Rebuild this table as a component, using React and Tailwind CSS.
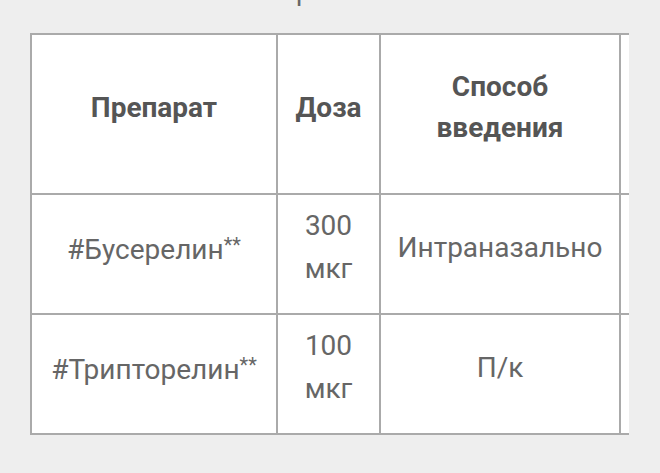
const rows = [
  { name: '#Бусерелин', dose: ['300', 'мкг'], route: 'Интраназально' },
  { name: '#Трипторелин', dose: ['100', 'мкг'], route: 'П/к' },
]

function HeadCell({ children, className = '' }) {
  return (
    <div className={`flex items-center justify-center text-center px-3 pb-[14px] h-[160px] border-r-2 border-b-2 border-[#aaaaaa] bg-white font-bold text-[28px] leading-[41px] text-[#555555] ${className}`}>
      {children}
    </div>
  )
}

function Cell({ children, className = '' }) {
  return (
    <div className={`flex items-center justify-center text-center px-2 pb-[14px] h-[120px] border-r-2 border-b-2 border-[#aaaaaa] bg-white text-[28px] leading-[43px] text-[#666666] ${className}`}>
      {children}
    </div>
  )
}

export default function App() {
  return (
    <div className="min-h-screen bg-[#eeeeee]" style={{ fontFamily: 'Roboto, "Noto Sans", sans-serif' }}>
      {/* caption above, scrolled out of view */}
      <div className="h-[33px] overflow-hidden">
        <p className="-mt-[30px] pl-[296px] text-[27px] leading-[43px] text-[#666666]">р</p>
      </div>

      <div className="ml-[30px] mr-[31px] overflow-hidden">
        <div className="grid grid-cols-[246px_103px_240px_220px] w-max border-l-2 border-t-2 border-[#aaaaaa]">
          <HeadCell>Препарат</HeadCell>
          <HeadCell>Доза</HeadCell>
          <HeadCell>
            <span>Способ<br />введения</span>
          </HeadCell>
          <HeadCell>
            <span>Кратность</span>
          </HeadCell>

          {rows.map(r => (
            <>
              <Cell key={r.name + 'n'}>
                <span>{r.name}<span className="text-[20px] align-[7px]">**</span></span>
              </Cell>
              <Cell key={r.name + 'd'}>
                <span>{r.dose[0]}<br />{r.dose[1]}</span>
              </Cell>
              <Cell key={r.name + 'r'}>{r.route}</Cell>
              <Cell key={r.name + 'x'}>1 раз в день</Cell>
            </>
          ))}
        </div>
      </div>
    </div>
  )
}
